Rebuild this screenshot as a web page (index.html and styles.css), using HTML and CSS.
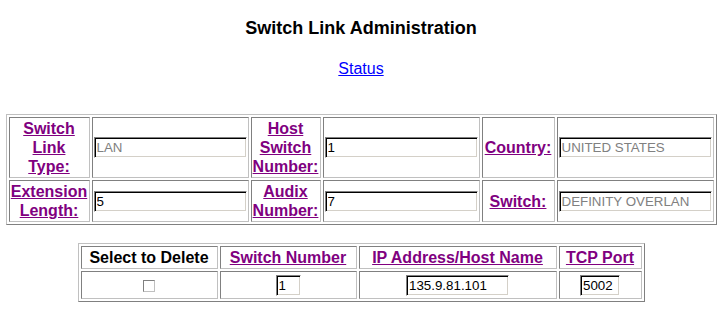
FILE: index.html
```html
<!DOCTYPE html>
<html lang="en">
<head>
    <meta charset="UTF-8">
    <title>Switch Link Administration</title>
    <link rel="stylesheet" href="styles.css">
</head>
<body>
<div class="page">
    <h1 class="title">Switch Link Administration</h1>
    <div class="nav"><a href="#">Status</a></div>

    <table class="settings">
        <tr>
            <td class="w-label"><a href="#">Switch<br>Link<br>Type:</a></td>
            <td class="w-field"><input class="field off" type="text" value="LAN" readonly></td>
            <td class="w-label2"><a href="#">Host<br>Switch<br>Number:</a></td>
            <td class="w-field"><input class="field" type="text" value="1"></td>
            <td class="w-label3"><a href="#">Country:</a></td>
            <td class="w-field"><input class="field off" type="text" value="UNITED STATES" readonly></td>
        </tr>
        <tr>
            <td><a href="#">Extension<br>Length:</a></td>
            <td><input class="field" type="text" value="5"></td>
            <td><a href="#">Audix<br>Number:</a></td>
            <td><input class="field" type="text" value="7"></td>
            <td><a href="#">Switch:</a></td>
            <td><input class="field off" type="text" value="DEFINITY OVERLAN" readonly></td>
        </tr>
    </table>

    <table class="links">
        <tr>
            <th class="w-del">Select to Delete</th>
            <th class="w-num"><a href="#">Switch Number</a></th>
            <th class="w-ip"><a href="#">IP Address/Host Name</a></th>
            <th class="w-port"><a href="#">TCP Port</a></th>
        </tr>
        <tr class="entry">
            <td><input class="check" type="checkbox"></td>
            <td><input class="small num" type="text" value="1"></td>
            <td><input class="small ip" type="text" value="135.9.81.101"></td>
            <td><input class="small port" type="text" value="5002"></td>
        </tr>
    </table>
</div>
</body>
</html>
```

FILE: styles.css
```css
body {
    margin: 0px;
    background: #ffffff;
    color: #000000;
    font-family: "Liberation Sans", Arial, sans-serif;
    font-size: 16px;
}

.page {
    width: 722px;
}

a {
    color: #800080;
}

.title {
    font-size: 18px;
    font-weight: bold;
    line-height: 21px;
    text-align: center;
    margin: 18px 0px 0px 0px;
}

.nav {
    text-align: center;
    line-height: 18px;
    margin-top: 21px;
}
.nav a {
    color: #0000ff;
}

/* old style border=1 tables */
table {
    border-collapse: separate;
    border-spacing: 2px;
    border: 1px solid;
    border-color: #c0c0c0 #808080 #808080 #c0c0c0;
    table-layout: fixed;
    margin-left: auto;
    margin-right: auto;
}
td, th {
    box-sizing: border-box;
    border: 1px solid;
    border-color: #808080 #c0c0c0 #c0c0c0 #808080;
    padding: 1px;
    line-height: 19px;
    text-align: center;
    vertical-align: middle;
    font-weight: bold;
}

.settings {
    width: 711px;
    margin-top: 36px;
}
.w-label  { width: 81px; }
.w-field  { width: 157px; }
.w-label2 { width: 70px; }
.w-label3 { width: 73px; }

.links {
    width: 567px;
    margin-top: 18px;
}
.w-del  { width: 137px; }
.w-num  { width: 137px; }
.w-ip   { width: 198px; }
.w-port { width: 83px; }

.entry td {
    height: 28px;
}

/* sunken text boxes */
.field, .small {
    box-sizing: border-box;
    height: 21px;
    margin: 0px;
    padding: 0px 1px 0px 2px;
    border: 1px solid;
    border-color: #808080 #ffffff #ffffff #808080;
    box-shadow: inset 1px 1px 0px #000000, inset -1px -1px 0px #d4d0c8;
    background: #ffffff;
    color: #000000;
    font-family: "Liberation Sans", Arial, sans-serif;
    font-size: 13.33px;
    outline: none;
}
.field {
    display: block;
    width: 153px;
}
.field.off {
    color: #808080;
}
.small {
    display: inline-block;
    vertical-align: middle;
}
.num  { width: 25px; }
.ip   { width: 103px; }
.port { width: 40px; }

.check {
    -webkit-appearance: none;
    appearance: none;
    box-sizing: border-box;
    width: 12px;
    height: 12px;
    margin: 0px;
    vertical-align: middle;
    border: 1px solid;
    border-color: #808080 #c0c0c0 #c0c0c0 #808080;
    background: #ffffff;
}
```
